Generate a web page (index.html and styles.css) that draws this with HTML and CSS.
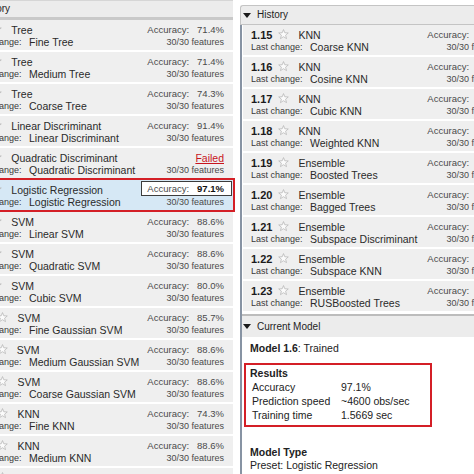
FILE: index.html
```html
<!DOCTYPE html>
<html>
<head>
<meta charset="utf-8">
<link rel="stylesheet" href="styles.css">
</head>
<body>
<div class="screen">
  <svg width="0" height="0" class="defs">
    <defs>
      <symbol id="star" viewBox="0 0 12 12">
        <polygon points="6,0.6 7.4,4.1 11.2,4.3 8.3,6.7 9.3,10.5 6,8.4 2.7,10.5 3.7,6.7 0.8,4.3 4.6,4.1" fill="#fbfbfb" stroke="#b4b4b4" stroke-width="0.8" stroke-linejoin="round"/>
      </symbol>
    </defs>
  </svg>

  <section class="panel panel-left">
    <div class="topstrip"></div>
    <div class="head head-left"><span class="tri"></span><span class="head-text">History</span></div>
    <div class="rows">
      <div class="row"><div class="main"><div class="l1"><b class="num">1.1</b><svg class="star"><use href="#star"/></svg><span class="title">Tree</span></div><div class="l2"><span class="lbl">Last change:</span><span class="val">Fine Tree</span></div></div><div class="side"><div class="acc">Accuracy:<span class="pct">71.4%</span></div><div class="feat">30/30 features</div></div></div>
      <div class="row"><div class="main"><div class="l1"><b class="num">1.2</b><svg class="star"><use href="#star"/></svg><span class="title">Tree</span></div><div class="l2"><span class="lbl">Last change:</span><span class="val">Medium Tree</span></div></div><div class="side"><div class="acc">Accuracy:<span class="pct">71.4%</span></div><div class="feat">30/30 features</div></div></div>
      <div class="row"><div class="main"><div class="l1"><b class="num">1.3</b><svg class="star"><use href="#star"/></svg><span class="title">Tree</span></div><div class="l2"><span class="lbl">Last change:</span><span class="val">Coarse Tree</span></div></div><div class="side"><div class="acc">Accuracy:<span class="pct">74.3%</span></div><div class="feat">30/30 features</div></div></div>
      <div class="row"><div class="main"><div class="l1"><b class="num">1.4</b><svg class="star"><use href="#star"/></svg><span class="title">Linear Discriminant</span></div><div class="l2"><span class="lbl">Last change:</span><span class="val">Linear Discriminant</span></div></div><div class="side"><div class="acc">Accuracy:<span class="pct">91.4%</span></div><div class="feat">30/30 features</div></div></div>
      <div class="row"><div class="main"><div class="l1"><b class="num">1.5</b><svg class="star"><use href="#star"/></svg><span class="title">Quadratic Discriminant</span></div><div class="l2"><span class="lbl">Last change:</span><span class="val">Quadratic Discriminant</span></div></div><div class="side"><div class="acc"><span class="failed">Failed</span></div><div class="feat">30/30 features</div></div></div>
      <div class="row selected"><div class="main"><div class="l1"><b class="num">1.6</b><svg class="star"><use href="#star"/></svg><span class="title">Logistic Regression</span></div><div class="l2"><span class="lbl">Last change:</span><span class="val">Logistic Regression</span></div></div><div class="side"><div class="acc"><span class="accbox">Accuracy:<b class="pct best">97.1%</b></span></div><div class="feat">30/30 features</div></div></div>
      <div class="row"><div class="main"><div class="l1"><b class="num">1.7</b><svg class="star"><use href="#star"/></svg><span class="title">SVM</span></div><div class="l2"><span class="lbl">Last change:</span><span class="val">Linear SVM</span></div></div><div class="side"><div class="acc">Accuracy:<span class="pct">88.6%</span></div><div class="feat">30/30 features</div></div></div>
      <div class="row"><div class="main"><div class="l1"><b class="num">1.8</b><svg class="star"><use href="#star"/></svg><span class="title">SVM</span></div><div class="l2"><span class="lbl">Last change:</span><span class="val">Quadratic SVM</span></div></div><div class="side"><div class="acc">Accuracy:<span class="pct">88.6%</span></div><div class="feat">30/30 features</div></div></div>
      <div class="row"><div class="main"><div class="l1"><b class="num">1.9</b><svg class="star"><use href="#star"/></svg><span class="title">SVM</span></div><div class="l2"><span class="lbl">Last change:</span><span class="val">Cubic SVM</span></div></div><div class="side"><div class="acc">Accuracy:<span class="pct">80.0%</span></div><div class="feat">30/30 features</div></div></div>
      <div class="row"><div class="main"><div class="l1"><b class="num">1.10</b><svg class="star"><use href="#star"/></svg><span class="title">SVM</span></div><div class="l2"><span class="lbl">Last change:</span><span class="val">Fine Gaussian SVM</span></div></div><div class="side"><div class="acc">Accuracy:<span class="pct">85.7%</span></div><div class="feat">30/30 features</div></div></div>
      <div class="row"><div class="main"><div class="l1"><b class="num">1.11</b><svg class="star"><use href="#star"/></svg><span class="title">SVM</span></div><div class="l2"><span class="lbl">Last change:</span><span class="val">Medium Gaussian SVM</span></div></div><div class="side"><div class="acc">Accuracy:<span class="pct">88.6%</span></div><div class="feat">30/30 features</div></div></div>
      <div class="row"><div class="main"><div class="l1"><b class="num">1.12</b><svg class="star"><use href="#star"/></svg><span class="title">SVM</span></div><div class="l2"><span class="lbl">Last change:</span><span class="val">Coarse Gaussian SVM</span></div></div><div class="side"><div class="acc">Accuracy:<span class="pct">88.6%</span></div><div class="feat">30/30 features</div></div></div>
      <div class="row"><div class="main"><div class="l1"><b class="num">1.13</b><svg class="star"><use href="#star"/></svg><span class="title">KNN</span></div><div class="l2"><span class="lbl">Last change:</span><span class="val">Fine KNN</span></div></div><div class="side"><div class="acc">Accuracy:<span class="pct">74.3%</span></div><div class="feat">30/30 features</div></div></div>
      <div class="row"><div class="main"><div class="l1"><b class="num">1.14</b><svg class="star"><use href="#star"/></svg><span class="title">KNN</span></div><div class="l2"><span class="lbl">Last change:</span><span class="val">Medium KNN</span></div></div><div class="side"><div class="acc">Accuracy:<span class="pct">88.6%</span></div><div class="feat">30/30 features</div></div></div>
      <div class="row"><div class="main"><div class="l1"><b class="num">1.15</b><svg class="star"><use href="#star"/></svg><span class="title">KNN</span></div><div class="l2"><span class="lbl">Last change:</span><span class="val">Coarse KNN</span></div></div><div class="side"><div class="acc">Accuracy:<span class="pct">65.7%</span></div><div class="feat">30/30 features</div></div></div>
    </div>
  </section>

  <section class="panel panel-right">
    <div class="head head-right"><span class="tri"></span><span class="head-text">History</span></div>
    <div class="rframe">
      <div class="rows">
        <div class="row"><div class="main"><div class="l1"><b class="num">1.15</b><svg class="star"><use href="#star"/></svg><span class="title">KNN</span></div><div class="l2"><span class="lbl">Last change:</span><span class="val">Coarse KNN</span></div></div><div class="side"><div class="acc">Accuracy:<span class="pct">65.7%</span></div><div class="feat">30/30 features</div></div></div>
        <div class="row"><div class="main"><div class="l1"><b class="num">1.16</b><svg class="star"><use href="#star"/></svg><span class="title">KNN</span></div><div class="l2"><span class="lbl">Last change:</span><span class="val">Cosine KNN</span></div></div><div class="side"><div class="acc">Accuracy:<span class="pct">82.9%</span></div><div class="feat">30/30 features</div></div></div>
        <div class="row"><div class="main"><div class="l1"><b class="num">1.17</b><svg class="star"><use href="#star"/></svg><span class="title">KNN</span></div><div class="l2"><span class="lbl">Last change:</span><span class="val">Cubic KNN</span></div></div><div class="side"><div class="acc">Accuracy:<span class="pct">88.6%</span></div><div class="feat">30/30 features</div></div></div>
        <div class="row"><div class="main"><div class="l1"><b class="num">1.18</b><svg class="star"><use href="#star"/></svg><span class="title">KNN</span></div><div class="l2"><span class="lbl">Last change:</span><span class="val">Weighted KNN</span></div></div><div class="side"><div class="acc">Accuracy:<span class="pct">85.7%</span></div><div class="feat">30/30 features</div></div></div>
        <div class="row"><div class="main"><div class="l1"><b class="num">1.19</b><svg class="star"><use href="#star"/></svg><span class="title">Ensemble</span></div><div class="l2"><span class="lbl">Last change:</span><span class="val">Boosted Trees</span></div></div><div class="side"><div class="acc">Accuracy:<span class="pct">65.7%</span></div><div class="feat">30/30 features</div></div></div>
        <div class="row"><div class="main"><div class="l1"><b class="num">1.20</b><svg class="star"><use href="#star"/></svg><span class="title">Ensemble</span></div><div class="l2"><span class="lbl">Last change:</span><span class="val">Bagged Trees</span></div></div><div class="side"><div class="acc">Accuracy:<span class="pct">80.0%</span></div><div class="feat">30/30 features</div></div></div>
        <div class="row"><div class="main"><div class="l1"><b class="num">1.21</b><svg class="star"><use href="#star"/></svg><span class="title">Ensemble</span></div><div class="l2"><span class="lbl">Last change:</span><span class="val">Subspace Discriminant</span></div></div><div class="side"><div class="acc">Accuracy:<span class="pct">94.3%</span></div><div class="feat">30/30 features</div></div></div>
        <div class="row"><div class="main"><div class="l1"><b class="num">1.22</b><svg class="star"><use href="#star"/></svg><span class="title">Ensemble</span></div><div class="l2"><span class="lbl">Last change:</span><span class="val">Subspace KNN</span></div></div><div class="side"><div class="acc">Accuracy:<span class="pct">82.9%</span></div><div class="feat">30/30 features</div></div></div>
        <div class="row"><div class="main"><div class="l1"><b class="num">1.23</b><svg class="star"><use href="#star"/></svg><span class="title">Ensemble</span></div><div class="l2"><span class="lbl">Last change:</span><span class="val">RUSBoosted Trees</span></div></div><div class="side"><div class="acc">Accuracy:<span class="pct">65.7%</span></div><div class="feat">30/30 features</div></div></div>
      </div>
      <div class="head head-model"><span class="tri"></span><span class="head-text">Current Model</span></div>
      <div class="model">
        <div class="mline"><b>Model 1.6</b>: Trained</div>
        <div class="results">
          <div class="mline"><b>Results</b></div>
          <div class="stat"><span class="sk">Accuracy</span><span class="sv">97.1%</span></div>
          <div class="stat"><span class="sk">Prediction speed</span><span class="sv">~4600 obs/sec</span></div>
          <div class="stat"><span class="sk">Training time</span><span class="sv">1.5669 sec</span></div>
        </div>
        <div class="mline mtype"><b>Model Type</b></div>
        <div class="mline">Preset: Logistic Regression</div>
      </div>
    </div>
  </section>
</div>
</body>
</html>
```

FILE: styles.css
```css
html, body {
  margin: 0;
  padding: 0;
  background: #ffffff;
}
body {
  width: 474px;
  height: 474px;
  overflow: hidden;
  font-family: "Liberation Sans", Arial, sans-serif;
  color: #2b2b2b;
}
.defs {
  position: absolute;
  width: 0;
  height: 0;
}
.screen {
  display: flex;
  width: 474px;
  height: 474px;
  overflow: hidden;
}
.panel {
  flex: none;
  display: flex;
  flex-direction: column;
}
.panel-left {
  width: 271px;
  margin-left: -38px;
}
.panel-right {
  width: 273px;
  margin-left: 7px;
}
.topstrip {
  height: 3px;
  background: #f1f1f1;
  border-bottom: 1px solid #d6d6d6;
}
.head {
  display: flex;
  align-items: center;
  background: #ececec;
  font-size: 10px;
  color: #1e1e1e;
  flex: none;
}
.head-left {
  height: 16px;
  border-bottom: 3px solid #c9c9c9;
}
.head-right {
  margin-top: 5px;
  height: 19px;
  border: 1px solid #c4c4c4;
  border-right: none;
  border-radius: 3px 0 0 0;
  box-sizing: border-box;
  height: 20px;
}
.tri {
  width: 0;
  height: 0;
  margin-left: 3px;
  margin-right: 6px;
  border-left: 4px solid transparent;
  border-right: 4px solid transparent;
  border-top: 5px solid #1a1a1a;
}
.head-right .tri {
  margin-left: 2px;
}
.head-text {
  line-height: 14px;
}
.rows {
  display: flex;
  flex-direction: column;
}
.row {
  display: flex;
  justify-content: space-between;
  height: 30px;
  box-sizing: border-box;
  padding: 3px 9px 0 8px;
  margin-bottom: 2px;
  background: #efefef;
  flex: none;
}
.row.selected {
  background: #d6e8f5;
  outline: 2px solid #d41f26;
}
.main {
  display: flex;
  flex-direction: column;
}
.l1 {
  display: flex;
  align-items: center;
  height: 13px;
  white-space: nowrap;
}
.num {
  font-size: 11px;
  font-weight: bold;
  color: #1b1b1b;
  margin-right: 6px;
}
.star {
  width: 11px;
  height: 11px;
  margin-right: 9px;
  flex: none;
}
.title {
  font-size: 10.5px;
  color: #2a2a2a;
}
.l2 {
  display: flex;
  align-items: center;
  height: 12px;
  white-space: nowrap;
}
.lbl {
  width: 59px;
  flex: none;
  font-size: 9px;
  color: #3a3a3a;
}
.val {
  font-size: 10.5px;
  color: #2a2a2a;
}
.side {
  display: flex;
  flex-direction: column;
  align-items: flex-end;
  white-space: nowrap;
}
.acc {
  height: 13px;
  display: flex;
  align-items: center;
  font-size: 9.5px;
  color: #4a4a4a;
}
.pct {
  margin-left: 8px;
}
.pct.best {
  color: #111;
}
.failed {
  color: #c8141c;
  text-decoration: underline;
  font-size: 10.5px;
}
.accbox {
  display: flex;
  align-items: center;
  height: 13px;
  margin-top: -2px;
  margin-right: -8px;
  padding: 0 7px 0 5px;
  border: 1px solid #3c3c3c;
  background: #ffffff;
}
.feat {
  height: 12px;
  display: flex;
  align-items: center;
  font-size: 9px;
  color: #4a4a4a;
}
.rframe {
  display: flex;
  flex-direction: column;
  flex: 1;
  border-left: 2px solid #8793a3;
}
.rframe .rows {
  padding-left: 1px;
}
.head-model {
  height: 21px;
  margin-top: 1px;
  border-top: 2px solid #bcbcbc;
}
.head-model .tri {
  margin-left: 1px;
}
.model {
  flex: 1;
  background: #ffffff;
  padding: 5px 0 0 8px;
  font-size: 10.5px;
  color: #222;
}
.mline {
  line-height: 13px;
  white-space: nowrap;
}
.results {
  margin-top: 8px;
  margin-left: -6px;
  width: 188px;
  box-sizing: border-box;
  padding: 2px 4px 3px 4px;
  border: 2px solid #d41f26;
}
.stat {
  display: flex;
  line-height: 14px;
  padding-left: 2px;
  white-space: nowrap;
}
.sk {
  width: 89px;
  flex: none;
}
.mtype {
  margin-top: 19px;
}
```
